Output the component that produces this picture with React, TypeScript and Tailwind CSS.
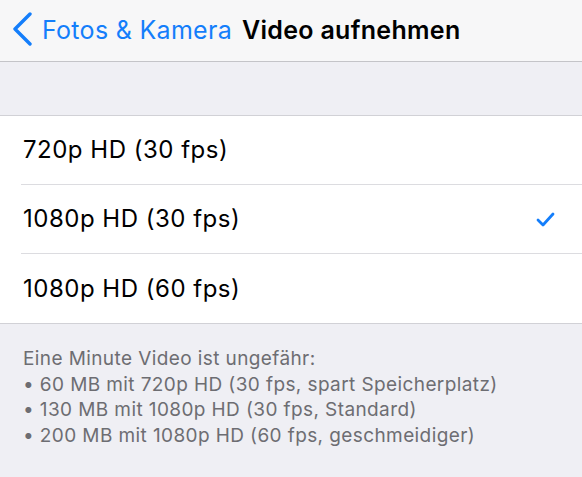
import React from "react"

const options = [
  { label: "720p HD (30 fps)", selected: false },
  { label: "1080p HD (30 fps)", selected: true },
  { label: "1080p HD (60 fps)", selected: false },
]

const notes = [
  "• 60 MB mit 720p HD (30 fps, spart Speicherplatz)",
  "• 130 MB mit 1080p HD (30 fps, Standard)",
  "• 200 MB mit 1080p HD (60 fps, geschmeidiger)",
]

const App = () => {
  return (
    <div
      className="flex h-[477px] w-[582px] flex-col overflow-hidden bg-[#efeff4]"
      style={{ fontFamily: "Inter, 'Noto Sans', sans-serif" }}
    >
      <div className="flex h-[62px] shrink-0 items-center border-b border-[#c4c4c8] bg-[#f7f7f8]">
        <svg width="21" height="34" viewBox="0 0 21 34" className="ml-[12px] mr-[9px] mt-[-3px]">
          <path d="M18 2 L3 17 L18 32" fill="none" stroke="#147efb" strokeWidth="3.4" strokeLinecap="round" strokeLinejoin="round" />
        </svg>
        <span className="text-[25px] tracking-[0.3px] text-[#147efb]">Fotos &amp; Kamera</span>
        <span className="ml-[10px] text-[25px] font-semibold tracking-[0.3px] text-black">Video aufnehmen</span>
      </div>

      <div className="h-[53px] shrink-0" />

      <div className="border-y border-[#d1d1d6] bg-white">
        {options.map((o, i) => (
          <div key={o.label} className="flex">
            <div
              className={`ml-[21px] flex h-[69px] flex-1 items-center justify-between pr-[27px] ${
                i < options.length - 1 ? "border-b border-[#dcdce0]" : ""
              }`}
            >
              <span className="ml-[2px] text-[24px] tracking-[0.5px] text-black">{o.label}</span>
              {o.selected && (
                <svg width="19" height="15" viewBox="0 0 19 15">
                  <path d="M2 8 L7 13 L17 2" fill="none" stroke="#147efb" strokeWidth="2.8" strokeLinecap="round" strokeLinejoin="round" />
                </svg>
              )}
            </div>
          </div>
        ))}
      </div>

      <div className="px-[23px] pt-[22px] text-[19px] leading-[25.5px] tracking-[0.4px] text-[#6d6d72]">
        <div>Eine Minute Video ist ungefähr:</div>
        {notes.map((n) => (
          <div key={n}>{n}</div>
        ))}
      </div>
    </div>
  )
}

export default App
